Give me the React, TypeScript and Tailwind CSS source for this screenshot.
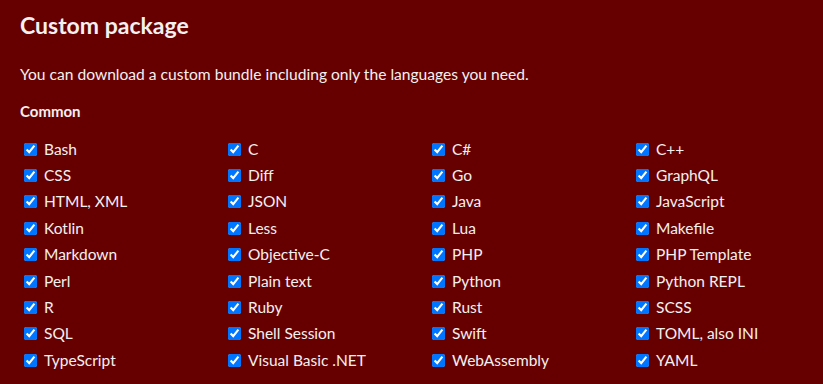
import React from "react";

const langs = [
  "Bash", "C", "C#", "C++",
  "CSS", "Diff", "Go", "GraphQL",
  "HTML, XML", "JSON", "Java", "JavaScript",
  "Kotlin", "Less", "Lua", "Makefile",
  "Markdown", "Objective-C", "PHP", "PHP Template",
  "Perl", "Plain text", "Python", "Python REPL",
  "R", "Ruby", "Rust", "SCSS",
  "SQL", "Shell Session", "Swift", "TOML, also INI",
  "TypeScript", "Visual Basic .NET", "WebAssembly", "YAML",
];

export default function App() {
  return (
    <div
      className="w-[823px] h-[384px] overflow-hidden bg-[#660000] text-[#f3f0f0] px-5"
      style={{ fontFamily: "Lato, 'Open Sans', sans-serif" }}
    >
      <h2 className="text-[23px] font-bold leading-[30px] pt-[10px]">Custom package</h2>
      <p className="text-[15.6px] leading-[20px] mt-[24px]">
        You can download a custom bundle including only the languages you need.
      </p>
      <h3 className="text-[15px] font-bold leading-[20px] mt-[17px]">Common</h3>
      <div className="grid grid-cols-[repeat(4,204px)] mt-[15px]">
        {langs.map((l) => (
          <label key={l} className="flex items-center h-[26.4px] text-[15.5px]">
            <input type="checkbox" defaultChecked className="m-0 ml-1 w-[13px] h-[13px]" />
            <span className="ml-[7px]">{l}</span>
          </label>
        ))}
      </div>
    </div>
  );
}
